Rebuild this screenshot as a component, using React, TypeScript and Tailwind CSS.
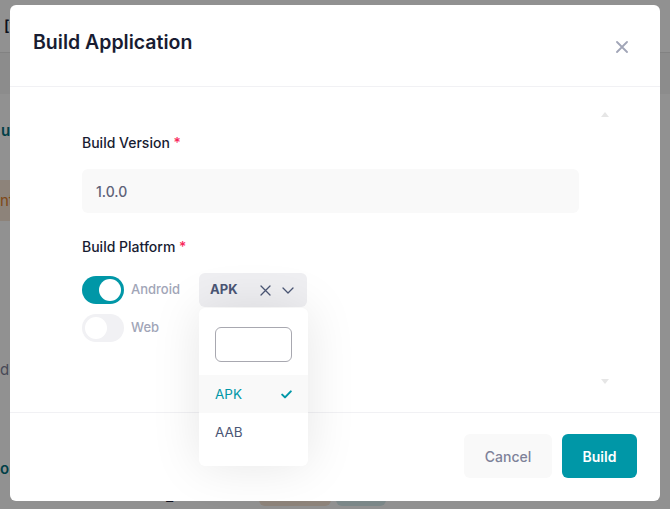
import React from 'react'

const font = { fontFamily: 'Inter, "Noto Sans", sans-serif' }

function Toggle({ on }: { on: boolean }) {
  return (
    <div
      className={
        on
          ? 'flex h-[28px] w-[42px] items-center justify-end rounded-full bg-[#0097a7] px-[3px]'
          : 'flex h-[28px] w-[42px] items-center justify-start rounded-full bg-[#f1f1f4] px-[3px]'
      }
    >
      <div className="h-[22px] w-[22px] rounded-full bg-white" />
    </div>
  )
}

function Background() {
  return (
    <div className="flex h-[509px] w-[670px] flex-col bg-white text-[15px] font-semibold">
      <div className="flex h-[54px] items-center border-b border-[#e4e4e4] px-[4px] text-[#181c32]">[v</div>
      <div className="h-[41px] bg-[#f6f6f6]" />
      <div className="mt-[26px] pl-[1px] text-[#00717d]">us</div>
      <div className="mt-[38px] flex h-[42px] w-[30px] items-center bg-[#f8e6d6] font-normal text-[#e07f2a]">nt</div>
      <div className="mt-[138px] font-normal text-[#7e8299]">d C</div>
      <div className="mt-[76px] text-[#00717d]">op</div>
      <div className="mt-[6px] flex items-start gap-[5px] pl-[165px]">
        <span className="mr-[80px] text-[#181c32]">E</span>
        <div className="h-[20px] w-[72px] rounded-[6px] bg-[#f8e6d6]" />
        <div className="h-[20px] w-[50px] rounded-[6px] bg-[#d9eef0]" />
      </div>
    </div>
  )
}

export default function App() {
  return (
    <div className="relative h-[509px] w-[670px] overflow-hidden" style={font}>
      <Background />
      <div className="absolute inset-0 bg-black/[0.43]" />

      <div className="absolute left-[10px] top-[5px] flex h-[496px] w-[650px] flex-col rounded-[6px] bg-white">
        {/* header */}
        <div className="flex h-[82px] items-center justify-between border-b border-[#f1f1f4] pl-[23px] pr-[32px]">
          <h2 className="pb-[5px] text-[19.5px] font-semibold text-[#181c32]">Build Application</h2>
          <svg width="12" height="12" viewBox="0 0 12 12" className="mt-[3px]">
            <path d="M1 1L11 11M11 1L1 11" stroke="#a1a5b7" strokeWidth="1.8" strokeLinecap="round" />
          </svg>
        </div>

        {/* body */}
        <div className="relative h-[325px] pl-[72px] pr-[81px] pt-[45px]">
          <div className="absolute right-[51px] top-[25px] h-0 w-0 border-x-[4px] border-b-[5px] border-x-transparent border-b-[#e6e6e6]" />
          <div className="absolute right-[51px] top-[292px] h-0 w-0 border-x-[4px] border-t-[5px] border-x-transparent border-t-[#e6e6e6]" />

          <label className="block text-[14px] font-medium text-[#181c32]">
            Build Version <span className="text-[#f8285a]">*</span>
          </label>
          <div className="mt-[16px] flex h-[44px] items-center rounded-[6px] bg-[#f9f9f9] px-[14px] text-[14px] font-medium text-[#5e6278]">
            1.0.0
          </div>

          <label className="mt-[23px] block text-[14px] font-medium text-[#181c32]">
            Build Platform <span className="text-[#f8285a]">*</span>
          </label>

          <div className="mt-[16px] flex flex-col gap-[7px]">
            <div className="flex items-center">
              <Toggle on />
              <span className="ml-[7px] w-[68px] text-[13px] font-medium text-[#a1a5b7]">Android</span>
              <div className="relative">
                <div className="flex h-[34px] w-[108px] items-center rounded-[6px] bg-[#efeff2] pl-[11px] pr-[13px] text-[13px] font-bold text-[#4b5675]">
                  <span className="flex-1">APK</span>
                  <svg width="11" height="11" viewBox="0 0 11 11" className="mr-[11px]">
                    <path d="M1 1L10 10M10 1L1 10" stroke="#4b5675" strokeWidth="1.3" strokeLinecap="round" />
                  </svg>
                  <svg width="12" height="7" viewBox="0 0 12 7">
                    <path d="M1 1L6 6L11 1" stroke="#4b5675" strokeWidth="1.3" fill="none" strokeLinecap="round" strokeLinejoin="round" />
                  </svg>
                </div>
                <div className="absolute left-0 top-[35px] z-10 w-[109px] rounded-[6px] bg-white pb-[15px] pt-[19px] shadow-[0_0_50px_rgba(0,0,0,0.1)]">
                  <div className="mx-[16px] h-[35px] w-[77px] rounded-[6px] border border-[#a8a8b0]" />
                  <div className="mt-[13px] flex h-[38px] items-center justify-between bg-[#f9f9f9] pl-[16px] pr-[16px] text-[13.5px] font-normal text-[#0097a7]">
                    APK
                    <svg width="11" height="9" viewBox="0 0 11 9">
                      <path d="M1.2 4.6L4 7.4L9.8 1.4" stroke="#0097a7" strokeWidth="2" fill="none" strokeLinecap="round" strokeLinejoin="round" />
                    </svg>
                  </div>
                  <div className="flex h-[38px] items-center pl-[16px] text-[13.5px] font-normal text-[#4b5675]">AAB</div>
                </div>
              </div>
            </div>
            <div className="flex items-center">
              <Toggle on={false} />
              <span className="ml-[7px] text-[13px] font-medium text-[#a1a5b7]">Web</span>
            </div>
          </div>
        </div>

        {/* footer */}
        <div className="flex flex-1 items-center justify-end gap-[10px] border-t border-[#f1f1f4] pb-[2px] pr-[23px]">
          <button className="h-[44px] w-[88px] rounded-[6px] bg-[#f9f9f9] text-[14px] font-medium text-[#7e8299]">Cancel</button>
          <button className="h-[44px] w-[75px] rounded-[6px] bg-[#0097a7] text-[14px] font-semibold text-white">Build</button>
        </div>
      </div>
    </div>
  )
}
